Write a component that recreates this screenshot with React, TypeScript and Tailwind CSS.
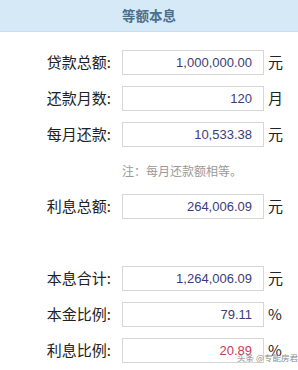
const rows: { label: string; value: string; unit: string; red?: boolean }[][] = [
  [
    { label: "贷款总额:", value: "1,000,000.00", unit: "元" },
    { label: "还款月数:", value: "120", unit: "月" },
    { label: "每月还款:", value: "10,533.38", unit: "元" },
  ],
  [{ label: "利息总额:", value: "264,006.09", unit: "元" }],
  [
    { label: "本息合计:", value: "1,264,006.09", unit: "元" },
    { label: "本金比例:", value: "79.11", unit: "%" },
    { label: "利息比例:", value: "20.89", unit: "%", red: true },
  ],
];

const cjk = "font-['Microsoft_YaHei','Noto_Sans_CJK_SC',sans-serif]";

function Row({ label, value, unit, red }: { label: string; value: string; unit: string; red?: boolean }) {
  return (
    <div className="flex h-[25px] items-center">
      <div className={`w-[111px] text-right text-[15px] text-[#222] ${cjk}`}>{label}</div>
      <div className="ml-[11px] flex h-[25px] w-[142px] items-center justify-end border border-[#d6d6d6] bg-white pr-[11px]">
        <span className={`font-['Liberation_Sans',sans-serif] text-[13px] ${red ? "text-[#c23d55]" : "text-[#3c3c7c]"}`}>
          {value}
        </span>
      </div>
      <div className={`ml-[4px] text-[15px] text-[#222] ${cjk}`}>{unit}</div>
    </div>
  );
}

export default function App() {
  return (
    <div className="relative h-[370px] w-[298px] overflow-hidden bg-white">
      <div className={`flex h-[32px] items-center justify-center border-b border-[#c9dfee] bg-[#d5e9f6] text-[13.5px] font-bold text-[#4b6f8e] ${cjk}`}>
        等额本息
      </div>
      <div className="flex flex-col gap-[11px] pt-[18px]">
        {rows[0].map((r) => (
          <Row key={r.label} {...r} />
        ))}
        <div className={`flex h-[25px] items-center pl-[122px] text-[12px] text-[#9a9a9a] ${cjk}`}>
          注：每月还款额相等。
        </div>
        {rows[1].map((r) => (
          <Row key={r.label} {...r} />
        ))}
        <div className="h-[25px]" />
        {rows[2].map((r) => (
          <Row key={r.label} {...r} />
        ))}
      </div>
      <div className={`absolute left-[237px] top-[353px] whitespace-nowrap text-[8.5px] leading-none text-[#8a8a8a] ${cjk}`}>
        头条 @专能房君
      </div>
    </div>
  );
}
